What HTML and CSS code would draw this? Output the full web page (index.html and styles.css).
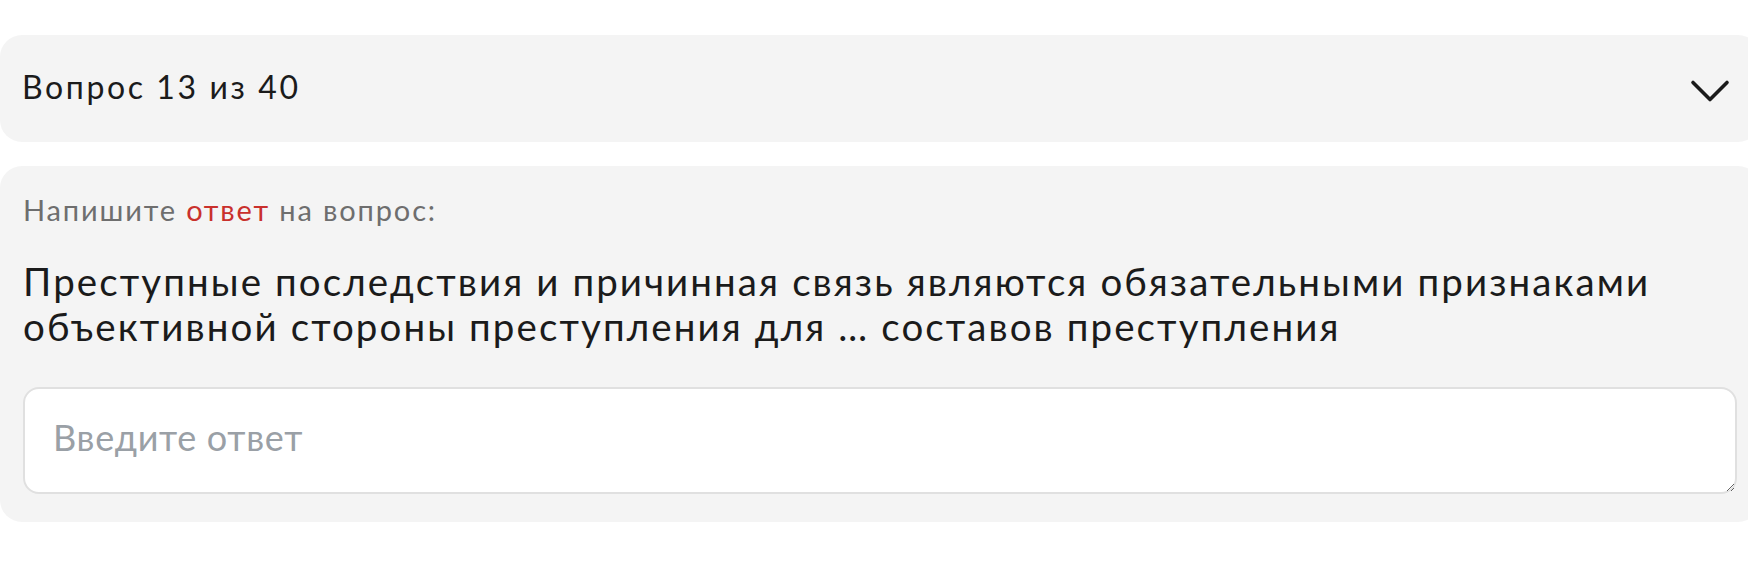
FILE: index.html
```html
<!DOCTYPE html>
<html lang="ru">
<head>
<meta charset="utf-8">
<title>Вопрос 13 из 40</title>
<link rel="stylesheet" href="styles.css">
</head>
<body>
<main class="quiz">
  <section class="card header-card">
    <h2 class="header-title">Вопрос 13 из 40</h2>
    <svg class="chevron" viewBox="0 0 40 24" width="40" height="24" aria-hidden="true">
      <polyline points="3,3.5 20,20.5 37,3.5" fill="none" stroke="#1b1b1b" stroke-width="3.6" stroke-linecap="round" stroke-linejoin="round"/>
    </svg>
  </section>
  <section class="card question-card">
    <p class="hint">Напишите <span class="accent">ответ</span> на вопрос:</p>
    <p class="question">Преступные последствия и причинная связь являются обязательными признаками объективной стороны преступления для … составов преступления</p>
    <textarea class="answer" placeholder="Введите ответ"></textarea>
  </section>
</main>
</body>
</html>
```

FILE: styles.css
```css
html, body {
  margin: 0;
  padding: 0;
  background: #ffffff;
  overflow: hidden;
}

body {
  font-family: "Lato", "Open Sans", sans-serif;
  color: #1b1b1b;
}

.quiz {
  display: flex;
  flex-direction: column;
  gap: 24px;
  padding-top: 35px;
  margin-right: -12px;
}

.card {
  background: #f4f4f4;
  border-radius: 22px;
}

.header-card {
  display: flex;
  align-items: center;
  justify-content: space-between;
  height: 107px;
  box-sizing: border-box;
  padding: 0 30px 0 22px;
}

.header-title {
  margin: 0 0 4px 0;
  font-size: 32px;
  line-height: 40px;
  letter-spacing: 2.6px;
  font-weight: 400;
  color: #1b1b1b;
}

.chevron {
  display: block;
  flex: none;
  margin-top: 4px;
}

.question-card {
  display: flex;
  flex-direction: column;
  padding: 27px 23px 28px 23px;
}

.hint {
  margin: 0;
  font-size: 29px;
  line-height: 34px;
  letter-spacing: 1.85px;
  color: #6e6e6e;
  font-weight: 400;
}

.accent {
  color: #c9302c;
}

.question {
  margin: 32px 0 0 0;
  font-size: 38.5px;
  line-height: 45px;
  letter-spacing: 2.1px;
  color: #1b1b1b;
  font-weight: 400;
}

.answer {
  margin-top: 38px;
  box-sizing: border-box;
  width: 100%;
  height: 107px;
  padding: 27px 28px;
  border: 2px solid #e0e0e0;
  border-radius: 16px;
  background: #ffffff;
  font-family: "Lato", "Open Sans", sans-serif;
  font-size: 36px;
  line-height: 42px;
  letter-spacing: 0.7px;
  color: #1b1b1b;
  outline: none;
  display: block;
}

.answer::placeholder {
  color: #9aa0a6;
  opacity: 1;
}
```
